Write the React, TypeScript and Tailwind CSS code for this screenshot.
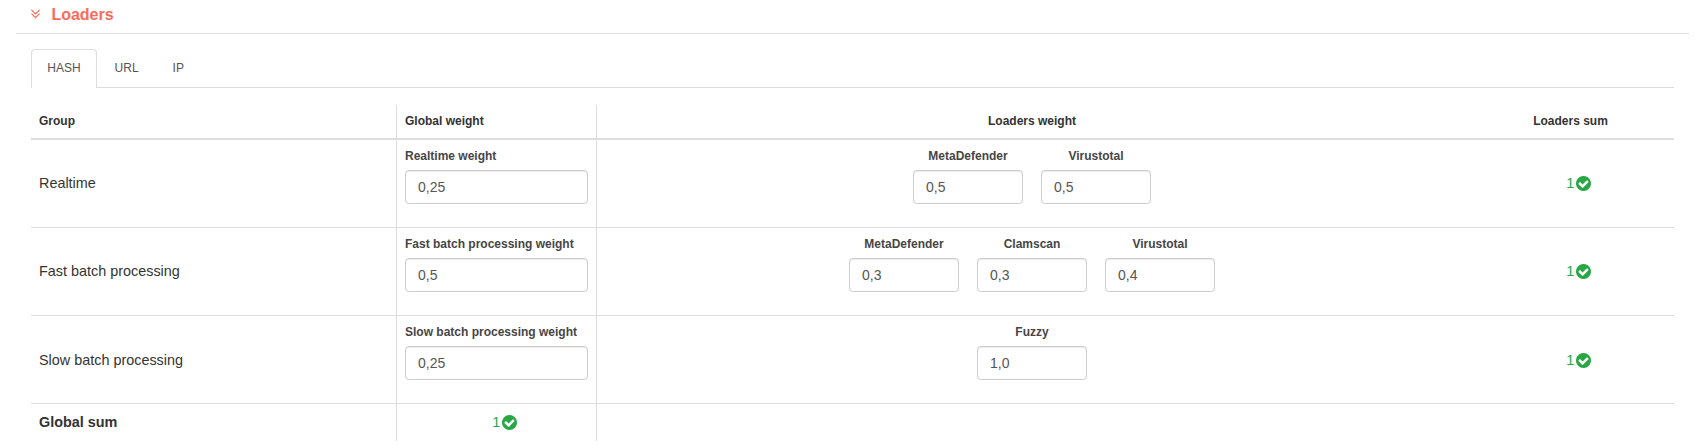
import React from "react";

type Field = { label: string; value: string };
type Row = { group: string; weight: Field; loaders: Field[] };

const rows: Row[] = [
  {
    group: "Realtime",
    weight: { label: "Realtime weight", value: "0,25" },
    loaders: [
      { label: "MetaDefender", value: "0,5" },
      { label: "Virustotal", value: "0,5" },
    ],
  },
  {
    group: "Fast batch processing",
    weight: { label: "Fast batch processing weight", value: "0,5" },
    loaders: [
      { label: "MetaDefender", value: "0,3" },
      { label: "Clamscan", value: "0,3" },
      { label: "Virustotal", value: "0,4" },
    ],
  },
  {
    group: "Slow batch processing",
    weight: { label: "Slow batch processing weight", value: "0,25" },
    loaders: [{ label: "Fuzzy", value: "1,0" }],
  },
];

const columns = "grid grid-cols-[365px_201px_870px_207px]";

function CheckCircle() {
  return (
    <svg className="size-[15px]" viewBox="0 0 1536 1536" fill="currentColor">
      <path d="M1284 606q0-28-18-46l-91-90q-19-19-45-19t-45 19L677 877 451 651q-19-19-45-19t-45 19l-91 90q-18 18-18 46 0 27 18 45l362 362q19 19 45 19 27 0 46-19l543-543q18-18 18-45zm252 162q0 209-103 385.5T1153.5 1433 768 1536t-385.5-103T103 1153.5 0 768t103-385.5T382.5 103 768 0t385.5 103T1433 382.5 1536 768z" />
    </svg>
  );
}

function Sum() {
  return (
    <span className="flex items-center justify-center gap-[1.5px] pl-4 text-[14.4px] leading-5 text-[#28a745]">
      <span>1</span>
      <CheckCircle />
    </span>
  );
}

function NumberField({ label, value, narrow }: Field & { narrow?: boolean }) {
  return (
    <label className={narrow ? "flex w-[110px] flex-col items-center" : "flex flex-col"}>
      <span className="mb-[5px] text-xs leading-[17px] font-bold text-[#464646]">{label}</span>
      <input
        defaultValue={value}
        className="h-[34px] w-full rounded-[4px] border border-[#ccc] bg-white px-3 text-[14px] text-[#555] shadow-[inset_0_1px_1px_rgba(0,0,0,0.075)] outline-none"
      />
    </label>
  );
}

export default function App() {
  return (
    <div className="h-[448px] overflow-hidden bg-white font-['Liberation_Sans',Arial,sans-serif] text-[14.4px] text-[#333]">
      <div className="mr-[13px] ml-4 flex h-[34px] items-start border-b border-[#ddd] pl-[15px]">
        <svg className="mt-[9px] h-[10px] w-[10px] text-[#fb6b5b]" viewBox="0 0 10 10" fill="none" stroke="currentColor" strokeWidth="1.2">
          <path d="M0.5 1 4.5 5 8.5 1M0.5 4.6 4.5 8.6 8.5 4.6" />
        </svg>
        <h1 className="mt-[5px] ml-[10.4px] text-[16px] leading-5 font-bold text-[#fb6b5b]">Loaders</h1>
      </div>
      <div className="mt-[15px] ml-[31px] w-[1643px]">
        <div className="flex h-[39px] border-b border-[#ddd] text-xs text-[#555]">
          <button className="mr-[1.6px] h-[39px] w-[66px] rounded-t-[4px] border border-b-0 border-[#ddd] bg-white pb-[2px]">HASH</button>
          <button className="mr-[2px] h-[38px] px-4">URL</button>
          <button className="h-[38px] px-4">IP</button>
        </div>
        <div className={`${columns} mt-[17px] h-[35px] border-b-2 border-[#ddd] text-xs font-bold`}>
          <div className="px-2 pt-2 leading-[17px]">Group</div>
          <div className="border-x border-[#ddd] px-2 pt-2 leading-[17px]">Global weight</div>
          <div className="pt-2 text-center leading-[17px]">Loaders weight</div>
          <div className="pt-2 text-center leading-[17px]">Loaders sum</div>
        </div>
        {rows.map((row) => (
          <div key={row.group} className={`${columns} group h-[88px] border-b border-[#ddd]`}>
            <div className="flex items-center px-2 pb-px leading-5 group-nth-[5]:pt-px group-nth-[5]:pb-0">{row.group}</div>
            <div className="border-x border-[#ddd] px-2 pt-2">
              <NumberField {...row.weight} />
            </div>
            <div className="flex justify-center gap-[18px] pt-2">
              {row.loaders.map((loader) => (
                <NumberField key={loader.label} {...loader} narrow />
              ))}
            </div>
            <div className="flex items-center justify-center pb-px group-nth-[5]:pt-px group-nth-[5]:pb-0">
              <Sum />
            </div>
          </div>
        ))}
        <div className={`${columns} h-[37px]`}>
          <div className="flex items-center px-2 font-bold">Global sum</div>
          <div className="flex items-center justify-center border-x border-[#ddd] pb-px">
            <Sum />
          </div>
        </div>
      </div>
    </div>
  );
}
